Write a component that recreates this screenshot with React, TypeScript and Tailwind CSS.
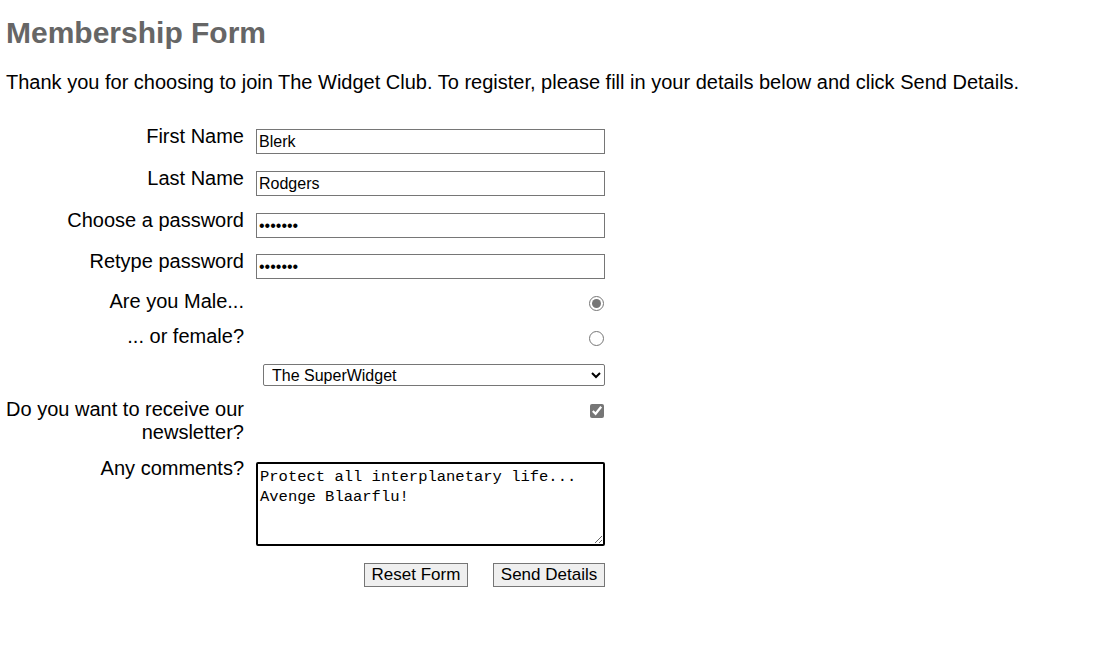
const labelCls = "w-[238px] shrink-0 text-right text-[20px] leading-[23px] text-black";

const App = () => {
  return (
    <div className="min-h-[666px] bg-white px-[6px] font-['Liberation_Sans',Arial,sans-serif] text-black">
      <h1 className="pt-[15px] text-[30px] font-bold leading-[36px] text-[#666666]">
        Membership Form
      </h1>
      <p className="mt-[19px] text-[20px] leading-[24px]">
        Thank you for choosing to join The Widget Club. To register, please fill in your details below and click Send
        Details.
      </p>

      <form className="mt-[31px] flex flex-col" onSubmit={(e) => e.preventDefault()}>
        {/* text fields */}
        <div className="flex h-[42px] items-start gap-[12px]">
          <label className={labelCls}>First Name</label>
          <input
            defaultValue="Blerk"
            className="mt-[4px] h-[25px] w-[349px] border border-[#767676] px-[2px] text-[16px] outline-none"
          />
        </div>
        <div className="flex h-[42px] items-start gap-[12px]">
          <label className={labelCls}>Last Name</label>
          <input
            defaultValue="Rodgers"
            className="mt-[4px] h-[25px] w-[349px] border border-[#767676] px-[2px] text-[16px] outline-none"
          />
        </div>
        <div className="flex h-[41px] items-start gap-[12px]">
          <label className={labelCls}>Choose a password</label>
          <input
            type="password"
            defaultValue="1234567"
            className="mt-[4px] h-[25px] w-[349px] border border-[#767676] px-[2px] text-[16px] outline-none"
          />
        </div>
        <div className="flex h-[40px] items-start gap-[12px]">
          <label className={labelCls}>Retype password</label>
          <input
            type="password"
            defaultValue="1234567"
            className="mt-[4px] h-[25px] w-[349px] border border-[#767676] px-[2px] text-[16px] outline-none"
          />
        </div>

        {/* radios */}
        <div className="flex h-[35px] items-start gap-[12px]">
          <label className={labelCls}>Are you Male...</label>
          <div className="flex w-[349px] justify-end">
            <input
              type="radio"
              name="sex"
              defaultChecked
              className="mt-[6px] mr-[1px] h-[15px] w-[15px] accent-[#767676]"
            />
          </div>
        </div>
        <div className="flex h-[35px] items-start gap-[12px]">
          <label className={labelCls}>... or female?</label>
          <div className="flex w-[349px] justify-end">
            <input type="radio" name="sex" className="mt-[6px] mr-[1px] h-[15px] w-[15px] accent-[#767676]" />
          </div>
        </div>

        {/* select */}
        <div className="flex h-[38px] items-start gap-[12px]">
          <div className="w-[238px] shrink-0" />
          <div className="flex w-[349px] justify-end">
            <select
              defaultValue="super"
              className="mt-[4px] h-[22px] w-[342px] rounded-[2px] border border-[#767676] bg-white pl-[4px] text-[16px] outline-none"
            >
              <option value="super">The SuperWidget</option>
              <option value="mega">The MegaWidget</option>
              <option value="wonder">The WonderWidget</option>
            </select>
          </div>
        </div>

        {/* newsletter */}
        <div className="flex h-[59px] items-start gap-[12px]">
          <label className={labelCls}>Do you want to receive our newsletter?</label>
          <div className="flex w-[349px] justify-end">
            <input
              type="checkbox"
              defaultChecked
              className="mt-[6px] mr-[1px] h-[14px] w-[14px] accent-[#767676]"
            />
          </div>
        </div>

        {/* comments */}
        <div className="flex items-start gap-[12px]">
          <label className={labelCls}>Any comments?</label>
          <textarea
            defaultValue={"Protect all interplanetary life...\nAvenge Blaarflu!"}
            className="mt-[5px] h-[84px] w-[349px] resize rounded-[2px] border-2 border-black px-[2px] py-[3px] font-['Liberation_Mono','DejaVu_Sans_Mono',monospace] text-[15.5px] leading-[20px] outline-none"
          />
        </div>

        {/* buttons */}
        <div className="mt-[17px] flex w-[599px] justify-end gap-[25px]">
          <button
            type="reset"
            className="h-[24px] w-[104px] border border-[#767676] bg-[#efefef] text-[17px] leading-[22px]"
          >
            Reset Form
          </button>
          <button
            type="submit"
            className="h-[24px] w-[112px] border border-[#767676] bg-[#efefef] text-[17px] leading-[22px]"
          >
            Send Details
          </button>
        </div>
      </form>
    </div>
  );
};

export default App;
